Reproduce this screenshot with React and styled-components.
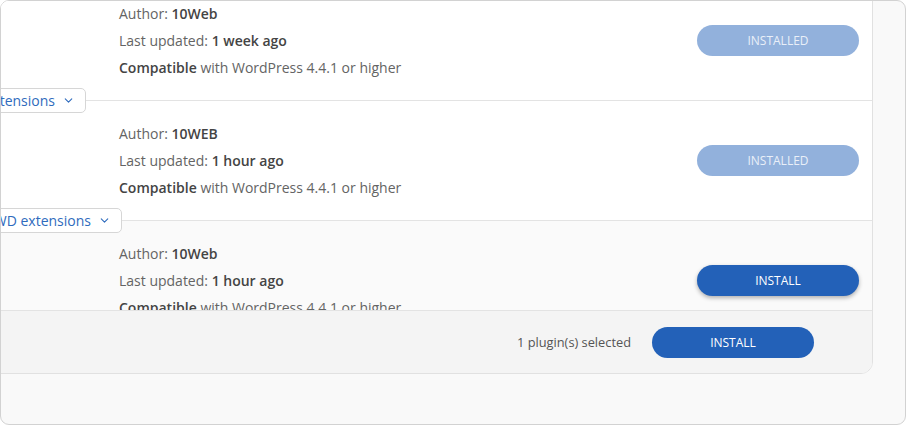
import styled, { createGlobalStyle } from "styled-components";
import { ChevronDown } from "lucide-react";

const GlobalStyle = createGlobalStyle`
  html, body {
    margin: 0;
    background: #ffffff;
  }
  * {
    box-sizing: border-box;
  }
`;

const Frame = styled.div`
  width: 906px;
  height: 425px;
  border: 1px solid #d2d2d2;
  border-radius: 9px;
  background: #f9f9f9;
  overflow: hidden;
  font-family: "Open Sans", "Noto Sans", sans-serif;
`;

const Panel = styled.div`
  margin: -21px 32px 0 -40px;
  background: #ffffff;
  border: 1px solid #e1e1e1;
  border-radius: 0 0 12px 12px;
  overflow: hidden;
`;

const List = styled.div`
  height: 329px;
  overflow: hidden;
`;

const Row = styled.div`
  position: relative;
  height: 120px;
  display: flex;
  align-items: center;
  justify-content: space-between;
  padding: 0 13px 0 157px;
  border-bottom: 1px solid #e3e3e3;
  background: ${(p) => (p.hovered ? "#fafafa" : "#ffffff")};
`;

const Info = styled.div`
  display: flex;
  flex-direction: column;
`;

const Line = styled.div`
  line-height: 27px;
  font-size: 14px;
  color: #646464;
`;

const Strong = styled.span`
  color: #444444;
  font-weight: 600;
`;

const Button = styled.button`
  width: 162px;
  height: 31px;
  border: none;
  border-radius: 16px;
  font-family: inherit;
  font-size: 12px;
  font-weight: 500;
  text-transform: uppercase;
  cursor: pointer;
  background: ${(p) => (p.installed ? "#92b1dc" : "#2361b8")};
  color: ${(p) => (p.installed ? "#e9eff8" : "#ffffff")};
  box-shadow: ${(p) => (p.raised ? "0 2px 4px rgba(0, 0, 0, 0.3)" : "none")};
`;

const Tag = styled.div`
  position: absolute;
  right: ${(p) => p.right}px;
  bottom: -13px;
  z-index: 2;
  height: 25px;
  display: flex;
  align-items: center;
  gap: 7px;
  padding: 0 10px 0 12px;
  background: #ffffff;
  border: 1px solid #d6d6d6;
  border-radius: 5px;
  color: #2f6bbd;
  font-size: 14px;
  white-space: nowrap;
`;

const Footer = styled.div`
  height: 63px;
  display: flex;
  align-items: center;
  justify-content: flex-end;
  gap: 21px;
  padding-right: 58px;
  background: #f4f4f4;
  border-top: 1px solid #e3e3e3;
`;

const Selected = styled.span`
  font-size: 12.8px;
  color: #555555;
`;

const plugins = [
  {
    author: "10Web",
    updated: "1 week ago",
    installed: true,
    tag: "Gallery extensions",
    tagRight: 786,
  },
  {
    author: "10WEB",
    updated: "1 hour ago",
    installed: true,
    tag: "Form Maker WD extensions",
    tagRight: 750,
  },
  {
    author: "10Web",
    updated: "1 hour ago",
    installed: false,
    hovered: true,
  },
];

export default function App() {
  return (
    <>
      <GlobalStyle />
      <Frame>
        <Panel>
          <List>
            {plugins.map((p, i) => (
              <Row key={i} hovered={p.hovered}>
                <Info>
                  <Line>
                    Author: <Strong>{p.author}</Strong>
                  </Line>
                  <Line>
                    Last updated: <Strong>{p.updated}</Strong>
                  </Line>
                  <Line>
                    <Strong>Compatible</Strong> with WordPress 4.4.1 or higher
                  </Line>
                </Info>
                <Button installed={p.installed} raised={!p.installed}>
                  {p.installed ? "Installed" : "Install"}
                </Button>
                {p.tag && (
                  <Tag right={p.tagRight}>
                    {p.tag}
                    <ChevronDown size={13} strokeWidth={2} />
                  </Tag>
                )}
              </Row>
            ))}
          </List>
          <Footer>
            <Selected>1 plugin(s) selected</Selected>
            <Button>Install</Button>
          </Footer>
        </Panel>
      </Frame>
    </>
  );
}
